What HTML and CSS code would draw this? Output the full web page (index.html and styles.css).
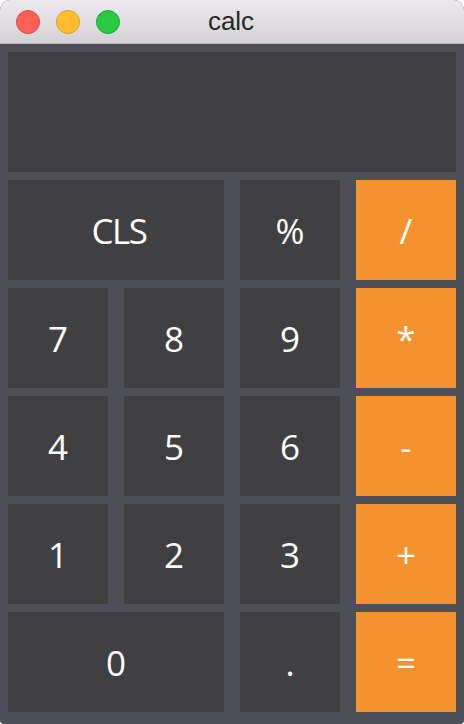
FILE: index.html
```html
<!DOCTYPE html>
<html>
<head>
<meta charset="utf-8">
<link rel="stylesheet" href="styles.css">
</head>
<body>
<div class="window">
  <div class="titlebar">
    <div class="lights">
      <span class="light red"></span>
      <span class="light yellow"></span>
      <span class="light green"></span>
    </div>
    <div class="title">calc</div>
  </div>
  <div class="calc">
    <div class="display"></div>
    <div class="key span2 cls">CLS</div>
    <div class="key">%</div>
    <div class="key op">/</div>
    <div class="key">7</div>
    <div class="key">8</div>
    <div class="key">9</div>
    <div class="key op">*</div>
    <div class="key">4</div>
    <div class="key">5</div>
    <div class="key">6</div>
    <div class="key op">-</div>
    <div class="key">1</div>
    <div class="key">2</div>
    <div class="key">3</div>
    <div class="key op">+</div>
    <div class="key span2">0</div>
    <div class="key">.</div>
    <div class="key op">=</div>
  </div>
</div>
</body>
</html>
```

FILE: styles.css
```css
html, body {
  margin: 0;
  padding: 0;
  background: #ffffff;
}
.window {
  width: 464px;
  height: 724px;
  background: #4e4e58;
  border-radius: 10px 10px 4px 4px;
  overflow: hidden;
  display: flex;
  flex-direction: column;
}
.titlebar {
  height: 43px;
  border-bottom: 1px solid #b4b2b5;
  background: linear-gradient(#eceaec, #d4d2d4);
  position: relative;
  display: flex;
  align-items: center;
  justify-content: center;
}
.lights {
  position: absolute;
  left: 16px;
  top: 10px;
  display: flex;
  gap: 16px;
}
.light {
  width: 22px;
  height: 22px;
  border-radius: 50%;
  border: 1px solid rgba(0,0,0,0.12);
}
.red { background: #fd5f57; border-color: #df4940; }
.yellow { background: #febc2e; border-color: #dea123; }
.green { background: #28c840; border-color: #1eaa2f; }
.title {
  font-family: "Liberation Sans", Arial, sans-serif;
  font-size: 26px;
  color: #262626;
  margin-left: -2px;
  margin-top: -1px;
}
.calc {
  padding: 8px 8px 12px 8px;
  display: grid;
  grid-template-columns: repeat(4, 100px);
  grid-template-rows: 120px repeat(5, 100px);
  column-gap: 16px;
  row-gap: 8px;
}
.display {
  grid-column: 1 / span 4;
  background: #403f42;
}
.key {
  background: #403f42;
  color: #ffffff;
  font-family: "Open Sans", "Noto Sans", sans-serif;
  font-size: 35px;
  display: flex;
  align-items: center;
  justify-content: center;
}
.span2 {
  grid-column: span 2;
}
.cls {
  letter-spacing: -1.5px;
  padding-left: 6px;
}
.op {
  background: #f4922f;
}
```
